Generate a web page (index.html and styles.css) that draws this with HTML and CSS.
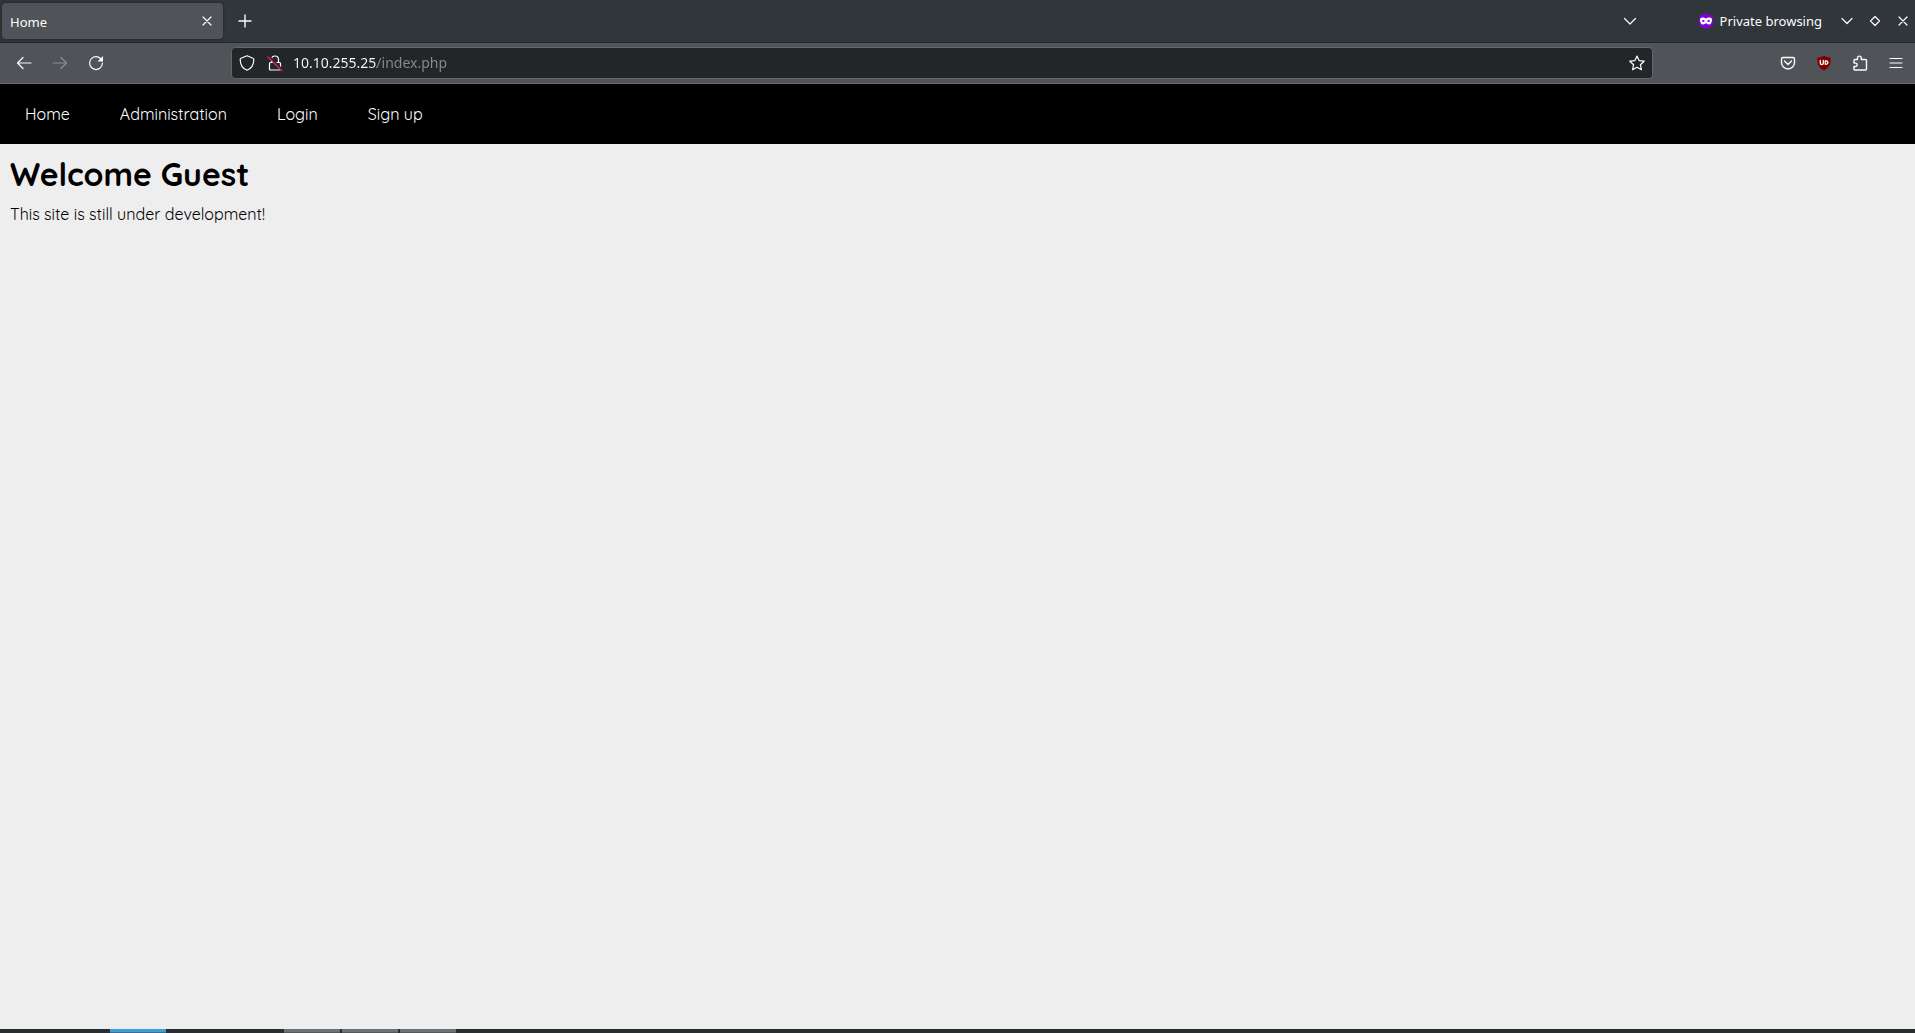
FILE: index.html
```html
<!DOCTYPE html>
<html lang="en">
<head>
  <meta charset="UTF-8">
  <title>Home</title>
  <meta name="viewport" content="width=device-width, initial-scale=1.0">
  <link rel="stylesheet" href="styles.css">
</head>
<body>
  <div class="tabbar">
    <div class="tab">
      <span>Home</span>
      <button class="tab-close" aria-label="Close tab"><svg width="16" height="16" viewBox="0 0 16 16"><path d="M4 4l8 8M12 4l-8 8"/></svg></button>
    </div>
    <button class="new-tab" aria-label="New tab"><svg width="16" height="16" viewBox="0 0 16 16"><path class="bold" d="M8 2v12M2 8h12"/></svg></button>
    <div class="window-tools">
      <button class="all-tabs" aria-label="List all tabs"><svg width="16" height="16" viewBox="0 0 16 16"><path d="M2.500 5.500L8 11l5.500-5.500"/></svg></button>
      <span class="private">
        <svg width="16" height="16" viewBox="0 0 16 16"><circle class="mask-bg" cx="8" cy="8" r="7.500"/><path class="mask" d="M2 6.500C2 5 3.500 4.500 5 4.500c1.500 0 2 .8 3 .8s1.500-.8 3-.8c1.500 0 3 .5 3 2 0 3-1.200 5-3.200 5-1.500 0-1.800-1.300-2.800-1.300s-1.300 1.300-2.800 1.300C3.200 11.500 2 9.500 2 6.500z"/><path class="mask-bg" d="M3.800 8c.8-1.300 2.200-1.300 3 0-.8 1.300-2.200 1.300-3 0zM9.200 8c.8-1.300 2.200-1.300 3 0-.8 1.300-2.200 1.300-3 0z"/></svg>
        Private browsing
      </span>
      <button aria-label="Minimize"><svg width="16" height="16" viewBox="0 0 16 16"><path d="M3 5.500l5 5 5-5"/></svg></button>
      <button aria-label="Maximize"><svg width="16" height="16" viewBox="0 0 16 16"><path d="M8 3.500l4.500 4.500L8 12.500 3.500 8z"/></svg></button>
      <button aria-label="Close window"><svg width="16" height="16" viewBox="0 0 16 16"><path d="M4 4l8 8M12 4l-8 8"/></svg></button>
    </div>
  </div>

  <div class="toolbar">
    <div class="nav-buttons">
      <button aria-label="Back"><svg width="16" height="16" viewBox="0 0 16 16"><path d="M15 8H1.500M7 2.500L1.500 8 7 13.500"/></svg></button>
      <button aria-label="Forward" disabled><svg width="16" height="16" viewBox="0 0 16 16"><path d="M1 8h13.500M9 2.500L14.500 8 9 13.500"/></svg></button>
      <button aria-label="Reload"><svg width="16" height="16" viewBox="0 0 16 16"><path d="M13.300 4.500A6.400 6.400 0 1 0 14.400 8"/><path class="solid" d="M15 1v5.500H9.500z"/></svg></button>
    </div>
    <div class="urlbar">
      <svg width="16" height="16" viewBox="0 0 16 16"><path d="M8 .8l6 2.400c.6.200.8.600.8 1.200 0 5-2 8.800-6.800 10.800C3.200 13.200 1.200 9.400 1.200 4.400c0-.6.200-1 .8-1.200z"/></svg>
      <svg width="16" height="16" viewBox="0 0 16 16"><path d="M4.500 7V4.500a3.500 3.500 0 0 1 7 0V7M3.500 7.500h9c.7 0 1 .3 1 1V14c0 .7-.3 1-1 1h-9c-.7 0-1-.3-1-1V8.500c0-.7.3-1 1-1z"/><path class="gap" d="M2 1.500l14 14"/><path class="slash" d="M1 2l14 14"/></svg>
      <input class="url" type="text" value="10.10.255.25/index.php" aria-label="Address" spellcheck="false">
      <button aria-label="Bookmark this page"><svg width="16" height="16" viewBox="0 0 16 16"><path d="M8 1l2.100 4.600 5.100.6-3.800 3.500 1 5.100L8 12.300l-4.400 2.500 1-5.100L.8 6.200l5.100-.6z"/></svg></button>
    </div>
    <div class="extensions">
      <button aria-label="Save to Pocket"><svg width="16" height="16" viewBox="0 0 16 16"><path class="bold" d="M3 2.500h10c1 0 1.500.5 1.500 1.500v3.500a6.500 6.500 0 0 1-13 0V4c0-1 .5-1.500 1.500-1.500zM4.500 6L8 9.500 11.500 6"/></svg></button>
      <button aria-label="uBlock Origin"><svg width="16" height="16" viewBox="0 0 16 16"><path class="ublock" d="M8 .5c2.200 1.500 4.300 2 6.800 2 0 6.500-.8 9.500-6.800 13C2 12 1.200 9 1.200 2.500c2.500 0 4.600-.5 6.800-2z"/><path class="ublock-mark" d="M4.300 5.500v2.700c0 1.700 3 1.700 3 0V5.500M9.300 5.900v3.300M9.300 5.900c3.500-.6 3.500 3.900 0 3.300"/></svg></button>
      <button aria-label="Extensions"><svg width="16" height="16" viewBox="0 0 16 16"><path class="bold" d="M5.500 4.500V3a1.900 1.900 0 0 1 3.800 0v1.500h4.200c.6 0 1 .3 1 1V14c0 .7-.4 1-1 1H3c-.7 0-1-.3-1-1v-2.500h1.500a1.700 1.700 0 0 0 0-3.400H2V5.500c0-.7.3-1 1-1z"/></svg></button>
      <button aria-label="Menu"><svg width="16" height="16" viewBox="0 0 16 16"><path d="M2 3.500h12M2 8h12M2 12.500h12"/></svg></button>
    </div>
  </div>

  <nav>
    <a href="#">Home</a>
    <a href="#">Administration</a>
    <a href="#">Login</a>
    <a href="#">Sign up</a>
  </nav>

  <main>
    <h1>Welcome Guest</h1>
    <p>This site is still under development!</p>
  </main>

  <div class="taskbar">
    <span class="task active"></span>
    <span class="task first"></span>
    <span class="task"></span>
    <span class="task"></span>
  </div>
</body>
</html>
```
FILE: styles.css
```css
* { box-sizing: border-box; }
body { margin: 0; min-height: 100vh; display: flex; flex-direction: column; background: #eee; color: #000; font-family: Quicksand, Lato, sans-serif; }
button { display: flex; align-items: center; justify-content: center; padding: 0; border: 0; background: none; color: #fcfcfc; }
button:disabled { color: #8b8e91; }
svg { display: block; flex: none; fill: none; stroke: currentColor; stroke-width: 1.2; stroke-linecap: round; stroke-linejoin: round; }
.bold { stroke-width: 1.4; }
.solid { fill: currentColor; stroke: none; }

/* browser window */
.tabbar, .toolbar { display: flex; align-items: center; color: #fcfcfc; font-family: "Noto Sans", sans-serif; font-size: 13px; }
.tabbar { height: 43px; padding-left: 2px; background: #31363b; border-bottom: 1px solid #222529; }
.tab { display: flex; align-items: center; justify-content: space-between; width: 221px; height: 36px; padding: 0 8px; border-radius: 4px; background: #505358; box-shadow: 0 0 3px rgba(0,0,0,0.4); }
.tab span { line-height: 20px; padding-top: 2px; }
.new-tab { margin-left: 14px; }
.window-tools { display: flex; align-items: center; gap: 12px; margin-left: auto; padding-right: 4px; }
.all-tabs { margin-right: 48px; }
.private { display: flex; align-items: center; gap: 6px; margin-right: 5px; }
.mask-bg { fill: #8000d7; stroke: none; }
.mask { fill: #fff; stroke: none; }

.toolbar { height: 41px; background: #505358; border-bottom: 1px solid #6a6d70; }
.nav-buttons { display: flex; gap: 20px; width: 231px; padding-left: 16px; }
.urlbar { display: flex; align-items: center; flex: 1; height: 32px; gap: 12px; padding: 0 7px; background: #232629; border: 1px solid #64676a; border-radius: 4px; }
.url { flex: 1; min-width: 0; height: 22px; margin-left: -2px; padding: 0 0 2px; border: 0; outline: none; font: 14px "Noto Sans", sans-serif; background: linear-gradient(to right, #fcfcfc 84px, #898b8d 84px); background-clip: text; -webkit-background-clip: text; color: transparent; }
.extensions { display: flex; justify-content: flex-end; gap: 20px; width: 262px; padding-right: 11px; }
.gap { stroke: #232629; stroke-width: 2; }
.slash { stroke: #e22850; stroke-width: 1.4; }
.ublock { fill: #800000; stroke: none; }
.ublock-mark { stroke: #fff; stroke-width: 1.3; }

/* page */
nav { display: flex; height: 60px; background: #000; }
nav a { display: flex; align-items: center; padding: 0 25px; color: #fff; font-size: 16px; text-decoration: none; }
main { flex: 1; padding: 10px; }
h1 { margin: 0; font-size: 32px; line-height: 40px; font-weight: 700; }
p { margin: 8px 0; font-size: 16px; line-height: 24px; }

.taskbar { display: flex; gap: 2px; height: 4px; padding-left: 110px; background: #2a2e32; }
.task { width: 56px; background: #6e7275; border-bottom: 1px solid #54585b; }
.task.active { background: #3d9fd6; border-color: #36718f; }
.task.first { margin-left: 116px; }
```
